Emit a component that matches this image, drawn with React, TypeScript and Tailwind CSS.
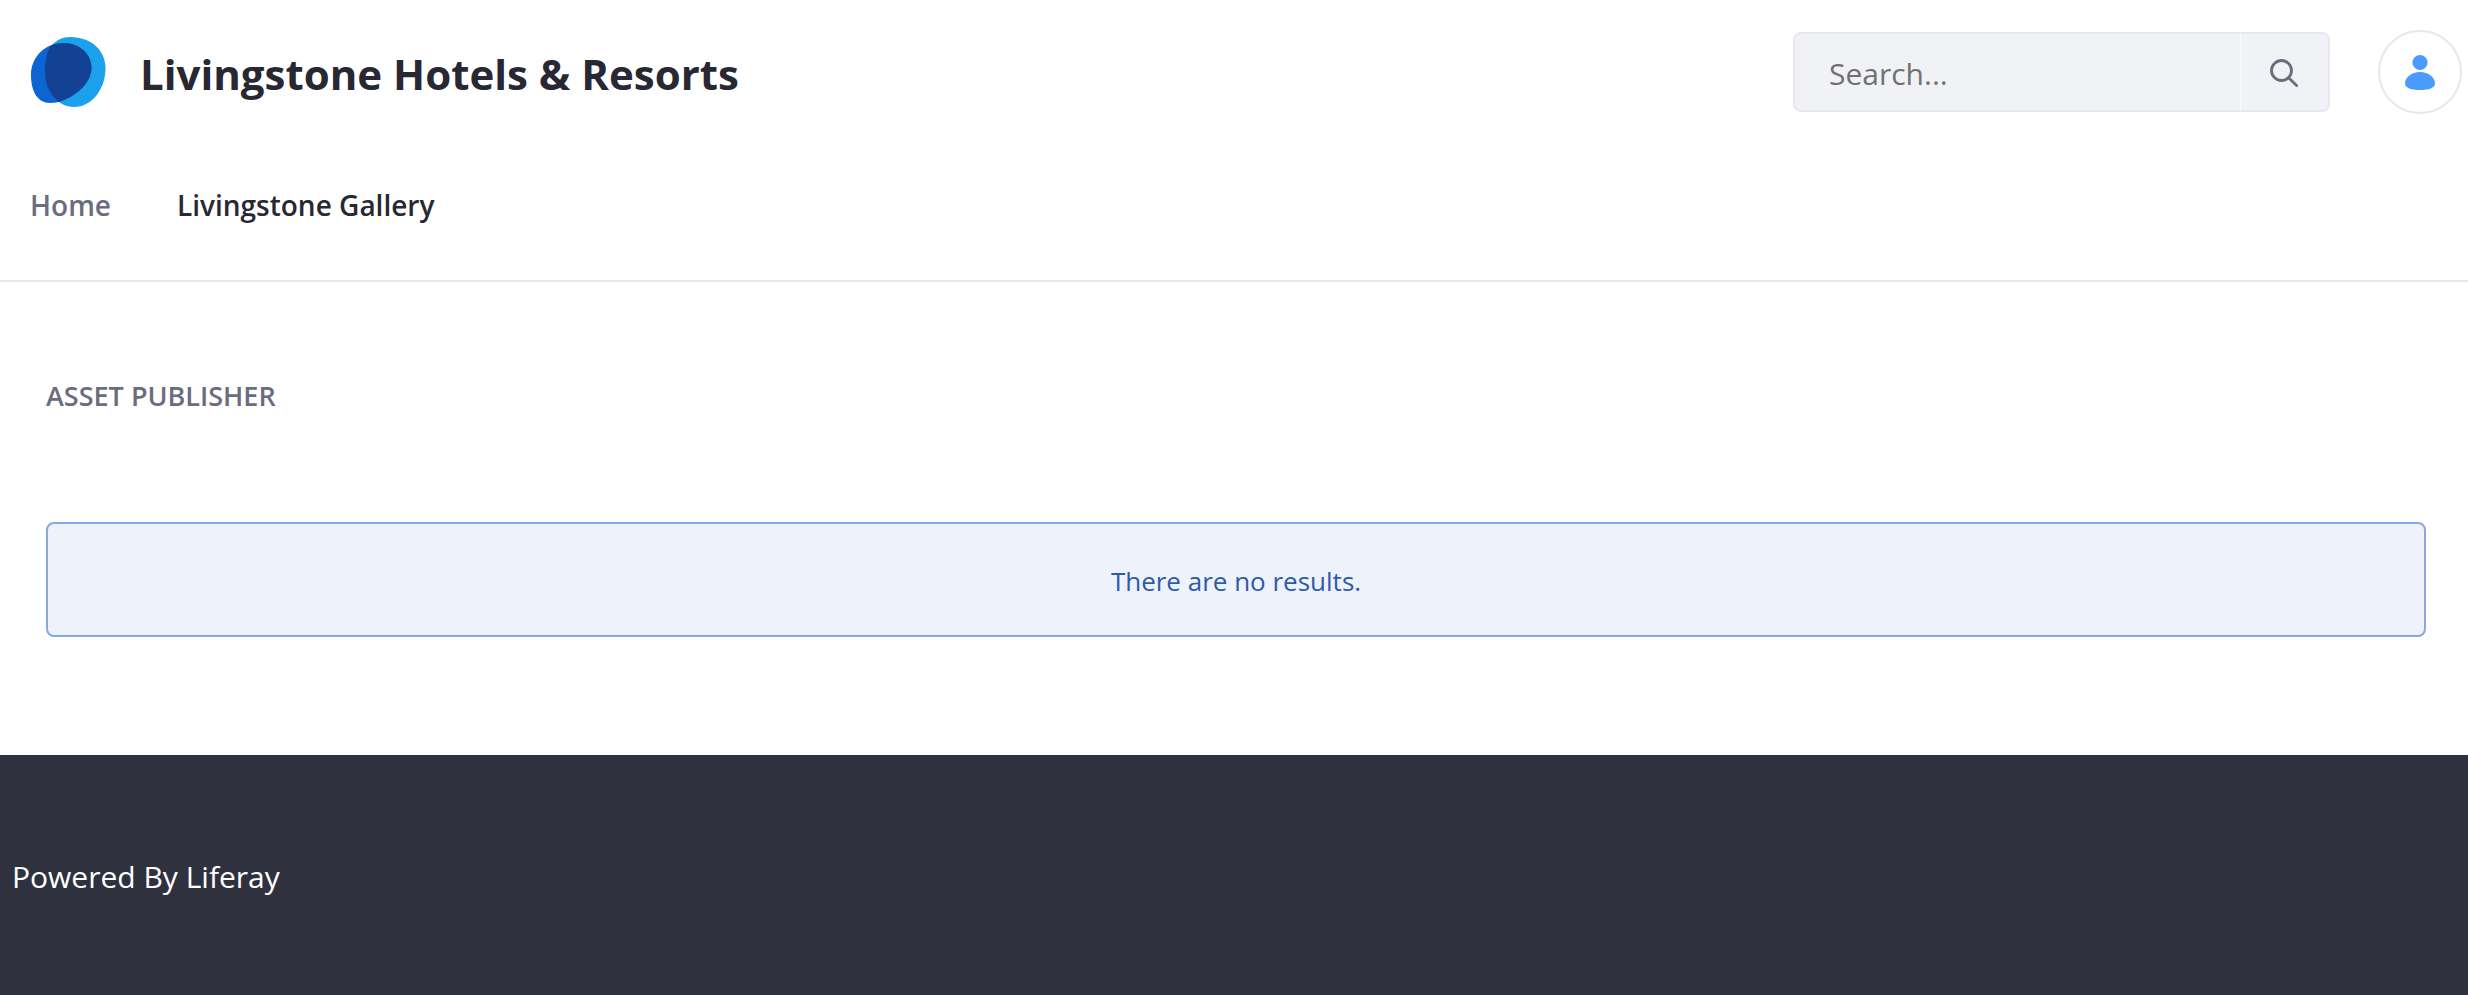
const FRONT = "M33 6C50 6 61.5 17 61.5 31C61.5 44 49 57 34 63C30 65 26 66 20 66C8 66 1 55 1 38C1 20 15 6 33 6Z";
const BACK = "M40 0C62 0 75.5 14 75.5 31C75.5 52 62 70 44 70C28 70 15 54 15 36C15 24 17 12 22 8C27 3 32 0 40 0Z";

function Logo() {
  return (
    <svg className="h-[70px] w-[76px] shrink-0" viewBox="0 0 76 70" aria-hidden="true">
      <defs>
        <clipPath id="logo-front">
          <path d={FRONT} />
        </clipPath>
      </defs>
      <path d={BACK} fill="#1ba1ec" />
      <path d={FRONT} fill="#0c65d2" />
      <path d={BACK} fill="#134194" clipPath="url(#logo-front)" />
    </svg>
  );
}

function SearchIcon() {
  return (
    <svg className="h-[28px] w-[28px]" viewBox="0 0 28 28" fill="none" stroke="#6b6c7e" aria-hidden="true">
      <circle cx="11.5" cy="11.5" r="10" strokeWidth="2.8" />
      <path d="M18.6 18.8L26.6 26.6" strokeWidth="2.8" strokeLinecap="round" />
    </svg>
  );
}

function UserIcon() {
  return (
    <svg className="h-[36px] w-[30px]" viewBox="0 0 30 36" fill="#4b9bff" aria-hidden="true">
      <circle cx="15" cy="8.5" r="7.6" />
      <path d="M15 18C6.5 18 0 23.5 0 29.5C0 34 6.5 36 15 36C23.5 36 30 34 30 29.5C30 23.5 23.5 18 15 18Z" />
    </svg>
  );
}

export default function App() {
  return (
    <div className="flex min-h-screen flex-col bg-white font-['Segoe_UI','Open_Sans',sans-serif] text-[#272833]">
      <header className="border-b-2 border-[#e7e7ed] pr-1.5 pl-[30px]">
        <div className="flex items-center pt-[30px]">
          <a href="#home" className="flex items-center gap-[34px]">
            <Logo />
            <h1 className="pt-1 text-[42px] leading-[60px] font-bold">Livingstone Hotels &amp; Resorts</h1>
          </a>
          <form
            role="search"
            className="ml-auto flex h-20 w-[537px] overflow-hidden rounded-lg border-2 border-[#e7e7ed] bg-[#f1f2f5]"
          >
            <input
              type="search"
              aria-label="Search"
              placeholder="Search..."
              className="min-w-0 flex-1 bg-transparent pt-0.5 pr-4 pl-[34px] text-[30px] outline-none placeholder:text-[#717171]"
            />
            <button
              type="submit"
              aria-label="Submit search"
              className="flex w-[88px] items-center justify-center border-l border-[#f9f9fb] pt-px pr-0.5"
            >
              <SearchIcon />
            </button>
          </form>
          <button
            type="button"
            aria-label="Sign in"
            className="ml-12 flex size-[84px] items-center justify-center rounded-full border-2 border-[#e7e7ed]"
          >
            <UserIcon />
          </button>
        </div>
        <nav className="flex gap-[66px] pt-[71px] pb-[55px] text-[28px] leading-10 font-semibold">
          <a href="#home" className="text-[#6b6c7e]">Home</a>
          <a href="#gallery" aria-current="page">Livingstone Gallery</a>
        </nav>
      </header>
      <main className="pt-[94px] pr-[42px] pb-[118px] pl-[46px]">
        <h2 className="text-[27px] leading-10 font-semibold text-[#6b6c7e] uppercase">Asset Publisher</h2>
        <div
          role="status"
          className="mt-[106px] rounded-lg border-2 border-[#89a7e0] bg-[#eef2fa] pt-[37px] pb-[34px] text-center text-[26px] leading-10 text-[#2e5aac]"
        >
          There are no results.
        </div>
      </main>
      <footer className="flex-1 bg-[#30313f] px-3 pt-[100px] pb-[96px] text-[30px] leading-[44px] text-white">
        Powered By <a href="#liferay">Liferay</a>
      </footer>
    </div>
  );
}
